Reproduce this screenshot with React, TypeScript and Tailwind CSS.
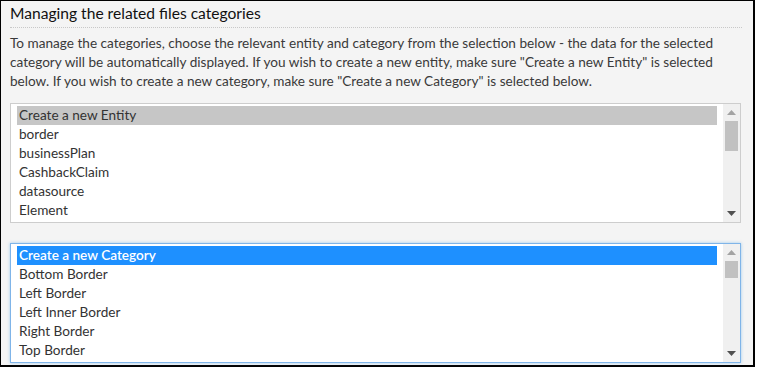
import React from 'react'

const entities = ['Create a new Entity', 'border', 'businessPlan', 'CashbackClaim', 'datasource', 'Element']
const categories = ['Create a new Category', 'Bottom Border', 'Left Border', 'Left Inner Border', 'Right Border', 'Top Border']

function Scrollbar({ thumbHeight }: { thumbHeight: string }) {
  return (
    <div className="flex w-[17px] shrink-0 flex-col bg-[#f0f0f0]">
      <div className="flex h-[17px] items-center justify-center">
        <svg width="9" height="5" viewBox="0 0 9 5">
          <path d="M4.5 0 L9 5 L0 5 Z" fill="#a3a3a3" />
        </svg>
      </div>
      <div className="flex-1">
        <div className={`mx-auto w-[13px] bg-[#c1c1c1] ${thumbHeight}`} />
      </div>
      <div className="flex h-[17px] items-center justify-center">
        <svg width="9" height="5" viewBox="0 0 9 5">
          <path d="M0 0 L9 0 L4.5 5 Z" fill="#505050" />
        </svg>
      </div>
    </div>
  )
}

function ListBox({ items, focused }: { items: string[]; focused?: boolean }) {
  return (
    <div
      className={`flex h-[120px] shrink-0 bg-white text-[13.6px] ${
        focused ? 'border border-[#7fb4e8] shadow-[0_0_3px_rgba(102,175,233,0.6)]' : 'border border-[#cdcdcd]'
      }`}
    >
      <div className="flex-1 px-[6px] pt-[2px]">
        {items.map((it, i) => (
          <div
            key={it}
            className={`h-[19px] px-[2px] leading-[19px] ${
              i === 0
                ? focused
                  ? 'bg-[#1e90ff] font-semibold text-white'
                  : 'bg-[#c6c6c6] text-[#333]'
                : 'text-[#333]'
            }`}
          >
            {it}
          </div>
        ))}
      </div>
      <Scrollbar thumbHeight={focused ? 'h-[17px]' : 'h-[30px]'} />
    </div>
  )
}

export default function App() {
  return (
    <div className="h-[372px] w-[758px] bg-white" style={{ fontFamily: 'Lato, "Open Sans", sans-serif' }}>
      <div className="flex h-[367px] w-[755px] flex-col border-b-2 border-l border-r-2 border-t border-black bg-[#f4f4f4] pl-[9px] pr-[11px] pt-[2px]">
        <h2 className="border-b border-dotted border-[#c8c8c8] pb-[3px] text-[15.6px] leading-[21px] text-[#111]">
          Managing the related files categories
        </h2>
        <p className="mt-[6px] text-[13.6px] leading-[19px] text-[#3a3a3a]">
          To manage the categories, choose the relevant entity and category from the selection below - the data for the selected
          <br />
          category will be automatically displayed. If you wish to create a new entity, make sure "Create a new Entity" is selected
          <br />
          below. If you wish to create a new category, make sure "Create a new Category" is selected below.
        </p>
        <div className="mt-[12px] flex flex-col gap-[20px] pr-[1px]">
          <ListBox items={entities} />
          <ListBox items={categories} focused />
        </div>
      </div>
    </div>
  )
}
